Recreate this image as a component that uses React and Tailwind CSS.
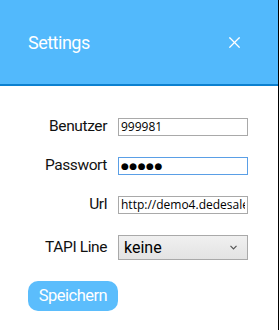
import { X } from 'lucide-react';

const fields = [
  { label: 'Benutzer', value: '999981' },
  { label: 'Passwort', value: '●●●●●', focused: true, dots: true },
  { label: 'Url', value: 'http://demo4.dedesales.de' },
];

export default function App() {
  return (
    <div className="w-[279px] h-[330px] bg-white border-r border-black font-['Roboto',sans-serif]">
      {/* Header */}
      <div className="h-[86px] bg-[#52b9fc] border-b-2 border-[#0c80cf] flex items-center justify-between pl-[28px] pr-[34px]">
        <span className="text-white text-[18px] tracking-[-0.5px] pt-[1px]">Settings</span>
        <X className="text-white w-[19px] h-[19px]" strokeWidth={1.5} />
      </div>

      {/* Form */}
      <div className="pt-[32px] pr-[30px]">
        {fields.map((f, i) => (
          <div key={i} className="flex items-center h-[18px] mb-[21px]">
            <label className="w-[108px] text-right text-[15.5px] text-[#111] tracking-[-0.4px] pr-[1px]">{f.label}</label>
            <input
              type="text"
              defaultValue={f.value}
              readOnly
              className={`ml-[10px] w-[130px] h-[18px] border px-[2px] text-black outline-none ${f.dots ? "text-[9px] tracking-[0.5px] font-['DejaVu_Sans',sans-serif]" : "text-[12px] font-['Open_Sans',sans-serif]"} ${f.focused ? 'border-[#5a9fe6]' : 'border-[#a9a9a9]'}`}
            />
          </div>
        ))}

        <div className="flex items-center mt-[1px]">
          <label className="w-[108px] text-right text-[15.5px] text-[#111] tracking-[-0.4px] pr-[1px]">TAPI Line</label>
          <div className="ml-[10px] w-[130px] h-[25px] border border-[#a9a9a9] bg-gradient-to-b from-[#f0f0f0] to-[#e3e3e3] flex items-center justify-between pl-[5px] pr-[10px]">
            <span className="text-[16px] text-black">keine</span>
            <svg width="7" height="5" viewBox="0 0 7 5" className="text-[#555]">
              <path d="M0.5 0.8 L3.5 3.8 L6.5 0.8" fill="none" stroke="currentColor" strokeWidth="1.2" />
            </svg>
          </div>
        </div>
      </div>

      <div className="pl-[28px] pt-[21px]">
        <button className="w-[90px] h-[30px] rounded-[10px] bg-[#5bbdfc] text-white text-[16.5px] tracking-[-0.5px]">
          Speichern
        </button>
      </div>
    </div>
  );
}
